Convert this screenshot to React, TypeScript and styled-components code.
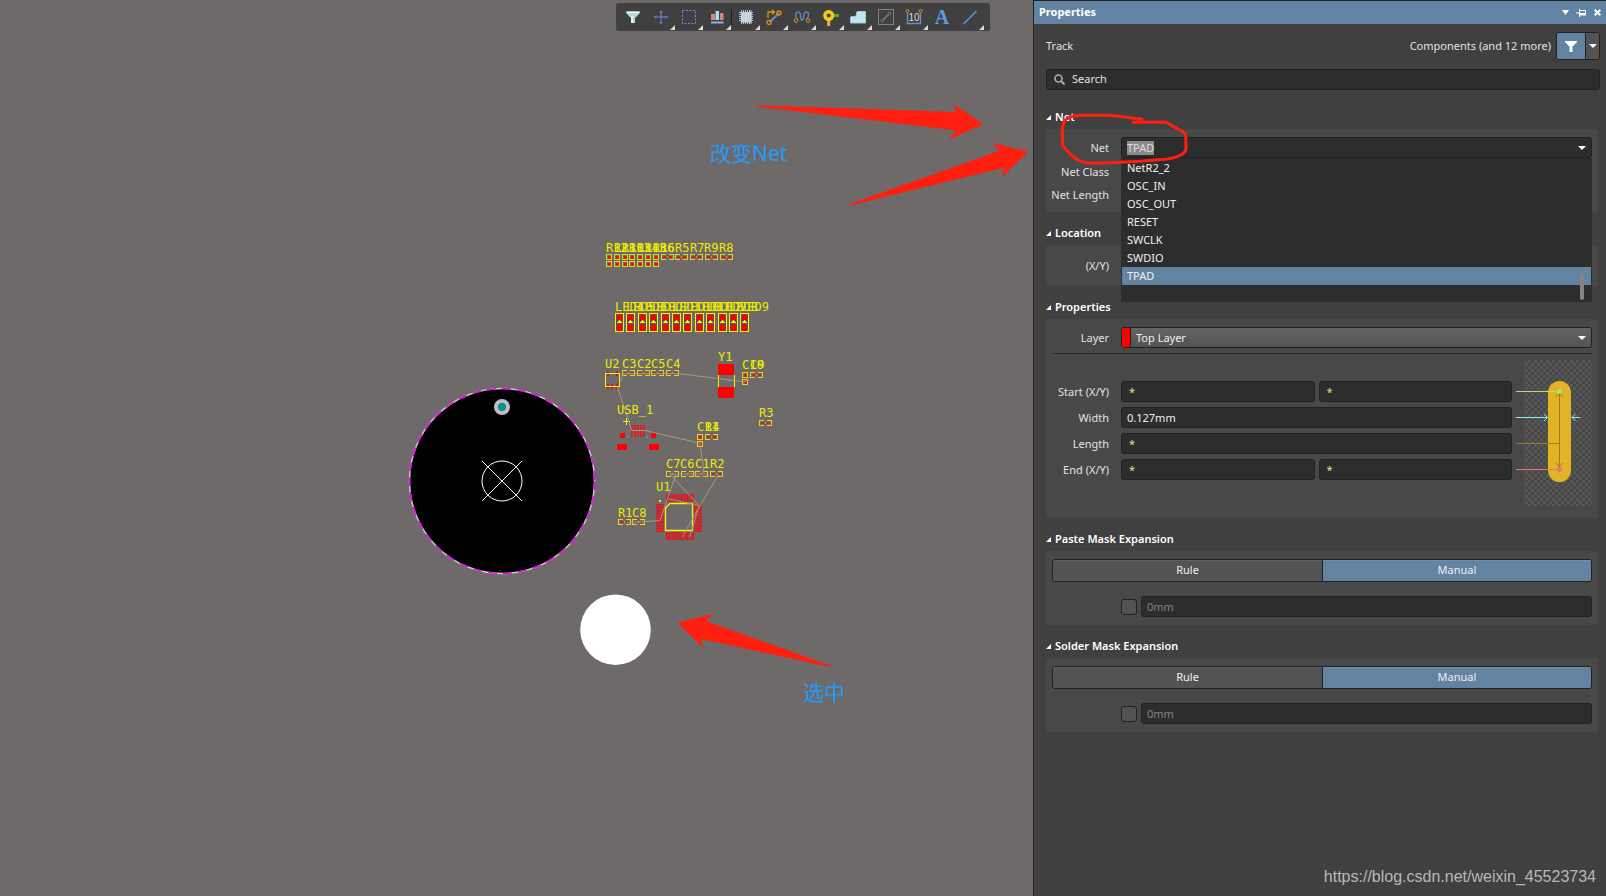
import React, { useEffect, useRef } from "react";
import styled, { createGlobalStyle, css } from "styled-components";

const color = {
  canvas: "#6e6a69",
  panel: "#404040",
  group: "#484848",
  field: "#2d2d2d",
  edge: "#212121",
  accent: "#6383a2",
  button: "#535353",
  text: "#e2e2e2",
  red: "#ff1f10",
  silk: "#f5f500",
  pad: "#ff0000",
  net: "#a09e78",
};

const GlobalStyle = createGlobalStyle`
  *, *::before, *::after { box-sizing: border-box; }
  body {
    margin: 0;
    background: ${color.canvas};
    color: ${color.text};
    font: 11px/16px "Noto Sans", "Open Sans", sans-serif;
  }
  button, input, select { font: inherit; color: inherit; }
`;

/* ---------- page ---------- */

const Page = styled.div`
  position: relative;
  display: grid;
  grid-template-columns: minmax(0, 1033fr) minmax(400px, 573fr);
  min-height: 100vh;
`;

const Workspace = styled.main`
  position: relative;
  overflow: hidden;
  background: ${color.canvas};
`;

const BoardDrawing = styled.svg`
  position: absolute;
  inset: 0;
  width: 100%;
  height: 100%;
`;

const Silk = styled.text`
  font-family: "DejaVu Sans Mono", monospace;
  font-size: 12px;
  fill: #ecec00;
`;

const Note = styled.text`
  font-family: "Noto Sans", "Noto Sans CJK SC", sans-serif;
  font-size: 21px;
  fill: #1e9bff;
`;

/* ---------- toolbar ---------- */

const Toolbar = styled.div`
  position: absolute;
  top: 3px;
  left: 50%;
  transform: translateX(-50%);
  display: flex;
  align-items: center;
  padding: 0 6px 0 3px;
  background: ${color.panel};
  border-radius: 2px;
`;

const ToolButton = styled.button<{ $menu?: boolean }>`
  position: relative;
  display: grid;
  place-items: center;
  width: 28px;
  height: 28px;
  padding: 0;
  border: 0;
  background: none;
  ${(p) =>
    p.$menu &&
    css`
      &::after {
        content: "";
        position: absolute;
        right: 0;
        bottom: 1px;
        border-style: solid;
        border-width: 0 0 5px 5px;
        border-color: transparent transparent #dcdcdc transparent;
      }
    `}
`;

const ToolDivider = styled.span`
  width: 1px;
  height: 16px;
  background: #1c1c1c;
`;

const ToolIcon = styled.svg.attrs({ viewBox: "0 0 18 18", "aria-hidden": true })`
  width: 18px;
  height: 18px;
  overflow: visible;
  fill: none;
`;

const Letter = styled.span`
  font: bold 20px/20px "Liberation Serif", serif;
  color: #5c9de6;
`;

/* ---------- panel ---------- */

const Panel = styled.aside`
  display: flex;
  flex-direction: column;
  border-top: 1px solid ${color.edge};
  border-left: 1px solid ${color.edge};
  background: ${color.panel};
`;

const TitleBar = styled.header`
  display: flex;
  align-items: center;
  justify-content: space-between;
  height: 23px;
  padding: 0 3px 0 5px;
  background: ${color.accent};
`;

const Title = styled.h1`
  margin: 0;
  padding-bottom: 2px;
  font-size: 11px;
  font-weight: 700;
  color: #fff;
`;

const TitleActions = styled.div`
  display: flex;
  gap: 4px;
`;

const TitleButton = styled.button`
  display: grid;
  place-items: center;
  width: 12px;
  height: 16px;
  padding: 0;
  border: 0;
  background: none;
`;

const PanelBody = styled.div`
  padding: 8px 6px 0 12px;
`;

const Scope = styled.div`
  display: flex;
  align-items: center;
  gap: 5px;
  height: 28px;
  margin-bottom: 9px;
`;

const ScopeKind = styled.span`
  flex: 1;
`;

const FilterGroup = styled.div`
  display: flex;
  height: 28px;
  border: 1px solid ${color.edge};
  border-radius: 3px;
  overflow: hidden;
`;

const FilterButton = styled.button<{ $narrow?: boolean }>`
  display: grid;
  place-items: center;
  width: ${(p) => (p.$narrow ? 14 : 28)}px;
  padding: 0;
  border: 0;
  background: ${(p) => (p.$narrow ? color.button : color.accent)};
  & + & {
    border-left: 1px solid ${color.edge};
  }
`;

const fieldBox = css`
  height: 21px;
  border: 1px solid ${color.edge};
  border-radius: 3px;
  background: ${color.field};
`;

const SearchBox = styled.label`
  ${fieldBox}
  display: flex;
  align-items: center;
  gap: 7px;
  padding: 0 7px;
`;

const SearchInput = styled.input`
  flex: 1;
  min-width: 0;
  padding: 0 0 2px;
  border: 0;
  outline: 0;
  background: none;
  &::placeholder {
    color: ${color.text};
    opacity: 1;
  }
`;

const Sections = styled.div`
  padding: 6px 2px 0 0;
`;

const SectionTitle = styled.h2`
  display: flex;
  align-items: center;
  gap: 4px;
  height: 33px;
  margin: 0;
  padding-top: 9px;
  font-size: 11px;
  font-weight: 600;
  color: #fff;
  &::before {
    content: "";
    border-style: solid;
    border-width: 0 0 5px 5px;
    border-color: transparent transparent #fff transparent;
  }
`;

const Group = styled.div<{ $bottom?: number }>`
  position: relative;
  padding: 8px 6px ${(p) => p.$bottom ?? 8}px;
  border-radius: 3px;
  background: ${color.group};
`;

const Row = styled.div<{ $height?: number }>`
  display: grid;
  grid-template-columns: 57px minmax(0, 1fr);
  column-gap: 12px;
  align-items: center;
  height: ${(p) => p.$height ?? 21}px;
`;

const RowLabel = styled.label`
  justify-self: end;
  white-space: nowrap;
`;

const ReadOnlyRows = styled.div`
  padding: 2px 0 1px;
`;

const Combo = styled.div`
  ${fieldBox}
  position: relative;
  display: flex;
  align-items: center;
  padding: 0 3px 0 5px;
`;

const ComboInput = styled.input`
  flex: 1;
  min-width: 0;
  height: 14px;
  padding: 0;
  border: 0;
  outline: 0;
  background: none;
  line-height: 14px;
  &::selection {
    background: #8a8a8a;
    color: #dedede;
  }
`;

const ArrowButton = styled.button`
  display: grid;
  place-items: center;
  width: 12px;
  height: 16px;
  padding: 0;
  border: 0;
  background: none;
`;

const Options = styled.ul`
  position: absolute;
  z-index: 1;
  top: 20px;
  left: -1px;
  right: -1px;
  height: 144px;
  margin: 0;
  padding: 1px;
  list-style: none;
  background: ${color.field};
  &::after {
    content: "";
    position: absolute;
    right: 8px;
    bottom: 2px;
    width: 4px;
    height: 27px;
    border-radius: 2px;
    background: #858585;
  }
`;

const Option = styled.li<{ $active: boolean }>`
  height: 18px;
  padding: 0 5px;
  line-height: 18px;
  color: #f0f0f0;
  background: ${(p) => (p.$active ? color.accent : "transparent")};
`;

const RedRing = styled.svg`
  position: absolute;
  z-index: 2;
  top: 0;
  left: 0;
  width: 144px;
  height: 40px;
  overflow: visible;
  pointer-events: none;
`;

const LayerPicker = styled.div`
  position: relative;
  display: flex;
  align-items: center;
  height: 21px;
  border: 1px solid ${color.edge};
  border-radius: 3px;
  background: linear-gradient(#656565, #525252);
  overflow: hidden;
`;

const Swatch = styled.span`
  width: 9px;
  height: 19px;
  border-right: 1px solid ${color.edge};
  background: #ff0000;
`;

const LayerSelect = styled.select`
  flex: 1;
  min-width: 0;
  height: 19px;
  padding: 0 5px;
  border: 0;
  outline: 0;
  appearance: none;
  background: none;
  color: #f0f0f0;
`;

const PickerArrow = styled.span`
  display: grid;
  place-items: center;
  width: 12px;
  margin-right: 3px;
`;

const Rule = styled.hr`
  height: 1px;
  margin: 5px 0 6px;
  border: 0;
  background: #2b2b2b;
`;

const Geometry = styled.div`
  display: grid;
  grid-template-columns: minmax(0, 1fr) 76px;
  column-gap: 4px;
`;

const GeometryRows = styled.div`
  display: grid;
  align-content: start;
  row-gap: 5px;
  padding-top: 21px;
`;

const Pair = styled.div`
  display: flex;
  gap: 4px;
`;

const Field = styled.input<{ $mixed?: boolean }>`
  ${fieldBox}
  flex: 1;
  width: 100%;
  min-width: 0;
  padding: 0 ${(p) => (p.$mixed ? 7 : 5)}px;
  outline: 0;
  color: ${(p) => (p.$mixed ? "#f0dc90" : "#f0f0f0")};
  &:disabled {
    color: #858585;
  }
`;

const TrackPreview = styled.svg`
  width: 76px;
  height: 146px;
  fill: none;
`;

const Segments = styled.div`
  display: grid;
  grid-template-columns: 1fr 1fr;
  height: 23px;
  margin-bottom: 14px;
  border: 1px solid ${color.edge};
  border-radius: 3px;
  overflow: hidden;
`;

const Segment = styled.button<{ $on?: boolean }>`
  padding: 0 0 2px;
  border: 0;
  color: #f0f0f0;
  background: ${(p) => (p.$on ? color.accent : color.button)};
  box-shadow: inset 0 1px ${(p) => (p.$on ? "#7190ad" : "#606060")};
  & + & {
    border-left: 1px solid ${color.edge};
  }
`;

const Expansion = styled.div`
  display: flex;
  align-items: center;
  gap: 4px;
  padding-left: 69px;
`;

const Check = styled.input`
  width: 16px;
  height: 16px;
  margin: 0;
  appearance: none;
  border: 1px solid ${color.edge};
  border-radius: 3px;
  background: ${color.button};
`;

const Watermark = styled.footer`
  margin-top: auto;
  padding: 0 10px 8px;
  text-align: right;
  font: 16px/22px "Liberation Sans", Arial, sans-serif;
  color: #b8b8b8;
`;

/* ---------- board parts ---------- */

const Pad = ({ x, y }: { x: number; y: number }) => (
  <g>
    <rect x={x + 0.5} y={y + 0.5} width="5" height="5" fill="none" stroke="#dada18" />
    <rect x={x + 2} y={y + 2} width="3" height="3" fill="#f0101c" />
  </g>
);

/* Two-pad part lying flat: a bracket opens towards the middle on each side. */
const Flat = ({ x, y }: { x: number; y: number }) => (
  <g>
    <path
      d={`M${x + 5} ${y + 0.5}H${x + 0.5}V${y + 5.5}H${x + 5}M${x + 8} ${y + 0.5}H${x + 12.5}V${y + 5.5}H${x + 8}`}
      fill="none"
      stroke="#dada18"
    />
    <path d={`M${x + 2} ${y + 2}h3v2h-3zM${x + 8} ${y + 2}h3v2h-3z`} fill="#f0101c" />
    <path d={`M${x + 6.5} ${y + 2}v2`} stroke="#b0a030" />
  </g>
);

const Upright = ({ x, y }: { x: number; y: number }) => (
  <g>
    <Pad x={x} y={y} />
    <Pad x={x} y={y + 7} />
  </g>
);

const Led = ({ x }: { x: number }) => (
  <g>
    <rect x={x + 0.5} y="313.5" width="8" height="18" fill="#6b4a55" stroke={color.silk} />
    <rect x={x + 2} y="315" width="5" height="5" fill={color.pad} />
    <rect x={x + 2} y="325" width="5" height="6" fill={color.pad} />
    <path d={`M${x + 1} 323L${x + 4.5} 320L${x + 8} 323z`} fill={color.silk} />
  </g>
);

const overlapped = ["R12", "R11", "R10", "R13", "R14", "R15", "R16"];
const singles = ["R6", "R5", "R7", "R9", "R8"];
const leds = ["LED4", "LED5", "LED6", "LED1", "LED2", "LED3", "LED10", "LED11", "LED12", "LED7", "LED8", "LED9"];
const ledX = (i: number) => Math.round(615 + i * 11.4);

const labels: [string, number, number][] = [
  ["U2", 605, 368],
  ["C3", 622, 368],
  ["C2", 637, 368],
  ["C5", 651, 368],
  ["C4", 666, 368],
  ["Y1", 718, 361],
  ["C10", 742, 369],
  ["C9", 750, 369],
  ["USB_1", 617, 414],
  ["C11", 697, 431],
  ["R4", 705, 431],
  ["R3", 759, 417],
  ["C7", 666, 468],
  ["C6", 680, 468],
  ["C1", 695, 468],
  ["R2", 710, 468],
  ["U1", 656, 491],
  ["R1", 618, 517],
  ["C8", 632, 517],
];

const pinOffsets = Array.from({ length: 10 }, (_, i) => i * 3);

const Board = () => (
  <BoardDrawing aria-label="PCB layout">
    <circle cx="502" cy="481" r="92.500" fill="#000" stroke="#d2c4d2" strokeWidth="1.500" />
    <circle cx="502" cy="481" r="92.500" fill="none" stroke="#f000f0" strokeWidth="1.500" strokeDasharray="9 6" />
    <circle cx="502" cy="407" r="8" fill="#c4bcc4" />
    <circle cx="502" cy="407" r="4.200" fill="#009494" />
    <g stroke="#fff" fill="none">
      <circle cx="502" cy="481" r="20" />
      <path d="M482 461l40 40M522 461l-40 40" />
    </g>
    <circle cx="615.500" cy="629.700" r="35.300" fill="#fff" />

    <g shapeRendering="crispEdges">
      {overlapped.map((name, i) => (
        <Upright key={name} x={606 + Math.round(i * 7.8)} y={254} />
      ))}
      {singles.map((name, i) => (
        <Flat key={name} x={Math.round(660.5 + i * 14.8)} y={254} />
      ))}
      {leds.map((name, i) => (
        <Led key={name} x={ledX(i)} />
      ))}

      <path d="M608 371v5M617 371v5M608 384v5M612 384v5M617 384v5" stroke="#e0101c" strokeWidth="2" />
      <rect x="605.5" y="373.5" width="14" height="13" fill="none" stroke={color.silk} />
      {[622, 637, 651, 666].map((x) => (
        <Flat key={x} x={x} y={370} />
      ))}
      <rect x="718" y="364" width="16" height="11" fill={color.pad} />
      <rect x="718" y="387" width="16" height="11" fill={color.pad} />
      <path d="M718.5 375v12M734.5 375v12" stroke={color.silk} />
      <Upright x={742} y={372} />
      <Flat x={750} y={372} />

      <path d="M626.5 418v7M623 421.500h7" stroke={color.silk} />
      <path d="M632 425v12M635 425v12M638 425v12M641 425v12M644 425v12" stroke="#d8202c" strokeWidth="2" />
      <rect x="620" y="433" width="5" height="5" fill={color.pad} />
      <rect x="651" y="433" width="5" height="5" fill={color.pad} />
      <rect x="617" y="444" width="10" height="6" fill={color.pad} />
      <rect x="649" y="444" width="10" height="6" fill={color.pad} />
      <rect x="627" y="436" width="2" height="2" fill="#3f9cb0" />
      <rect x="646" y="436" width="2" height="2" fill="#3f9cb0" />

      <Upright x={697} y={434} />
      <Flat x={705} y={434} />
      <Flat x={759} y={420} />
      {[666, 681, 695, 710].map((x) => (
        <Flat key={x} x={x} y={471} />
      ))}
      <Flat x={618} y={519} />
      <Flat x={632} y={519} />

      <path d="M666 494h27v8h-27zM666 532h27v8h-27zM656 504h8v27h-8zM694 504h8v27h-8z" fill="#a83c44" />
      {pinOffsets.map((d) => (
        <path
          key={d}
          d={`M${666.5 + d} 494v8M${666.5 + d} 532v8M656 ${504.5 + d}h8M694 ${504.5 + d}h8`}
          stroke="#f0101c"
        />
      ))}
      <rect x="659" y="500" width="2" height="2" fill={color.silk} />
    </g>
    <path
      d="M670 503.500h22.500v27h-27v-22.500z"
      fill={color.canvas}
      stroke={color.silk}
      strokeWidth="1.300"
    />

    <g fill="none" stroke={color.net}>
      <path d="M619.700 382.500L624.300 373.500H678L745 382L751.500 375.500" />
      <path d="M617.500 387L631.700 430.500H645L700 443.300L704 472.500" />
      <path d="M627.300 522.500L660 520.700L676 474" />
      <path d="M669.300 473.500L699 505.500L669 499" />
      <path d="M719 474L698.300 508.500L682.300 537M699 506L689.700 537" />
      <path d="M669 474H706" />
    </g>

    {overlapped.map((name, i) => (
      <Silk key={name} x={606 + Math.round(i * 7.8)} y="252">
        {name}
      </Silk>
    ))}
    {singles.map((name, i) => (
      <Silk key={name} x={Math.round(660 + i * 14.8)} y="252">
        {name}
      </Silk>
    ))}
    {leds.map((name, i) => (
      <Silk key={name} x={ledX(i)} y="311">
        {name}
      </Silk>
    ))}
    {labels.map(([name, x, y]) => (
      <Silk key={name} x={x} y={y}>
        {name}
      </Silk>
    ))}

    <g fill={color.red}>
      <path d="M757.700 105.300L956 112L953 103.700L983.300 124.300L949.700 139.300L955 130.300L757.700 106.700z" />
      <path d="M850 203.700L999.700 150.700L992 142.700L1028.300 151.700L1001.700 177.300L1004 167.700L850.700 205.300z" />
      <path d="M677.700 622.700L713 613.700L705.700 621L831 665.700V667.300L701 639L703.300 648.300z" />
    </g>
    <Note x="710" y="161">
      改变Net
    </Note>
    <Note x="803" y="700">
      选中
    </Note>
  </BoardDrawing>
);

/* ---------- small glyphs ---------- */

const Caret = () => (
  <svg width="8" height="4" viewBox="0 0 8 4" aria-hidden="true">
    <path d="M0 0h8L4 4z" fill="#fff" />
  </svg>
);

const orange = "#d9920f";

const tools = (
  <>
    <ToolButton title="Selection filter">
      <ToolIcon>
        <path d="M2.500 3.500h13v2L11 10v5H7v-5L2.500 5.500z" fill="#b9d8de" />
        <path d="M2.500 3.500h13v1.500h-13z" fill="#f0fafa" />
        <path d="M7 8h2v7H7z" fill="#e6f4f6" />
      </ToolIcon>
    </ToolButton>
    <ToolButton $menu title="Move">
      <ToolIcon stroke="#7189dc">
        <path d="M9 3v12.500M2.500 9h13M7.500 4.500L9 3l1.500 1.500M7.500 14L9 15.500l1.500-1.500M4 7.500L2.500 9 4 10.500M14 7.500L15.500 9 14 10.500" />
      </ToolIcon>
    </ToolButton>
    <ToolButton $menu title="Select area">
      <ToolIcon stroke="#6f8af0">
        <path d="M2.500 2.500h13v13h-13z" strokeDasharray="2 1.500" />
      </ToolIcon>
    </ToolButton>
    <ToolButton $menu title="Align">
      <ToolIcon>
        <path d="M3 6h4v6H3zM12 5h3.500v7H12z" fill="#e08078" />
        <path d="M7.500 3h3.500v9H7.500z" fill="#a8e0f0" />
        <path d="M3 13.500h12.500v2H3z" fill="#7fb4f5" />
      </ToolIcon>
    </ToolButton>
    <ToolDivider />
    <ToolButton $menu title="Place component">
      <ToolIcon>
        <path
          d="M4.500 2v14M6.500 2v14M8.500 2v14M10.500 2v14M12.500 2v14M14 2v14M2 4.500h14M2 6.500h14M2 8.500h14M2 10.500h14M2 12.500h14"
          stroke="#a5cdd5"
        />
        <rect x="4" y="4" width="10.500" height="10.500" fill="#cdd2de" />
      </ToolIcon>
    </ToolButton>
    <ToolButton $menu title="Route">
      <ToolIcon>
        <path d="M5 14L14 5" stroke="#6a8fc8" strokeWidth="2" />
        <g stroke={orange} strokeWidth="1.300">
          <path d="M3 10V4h6M7 1.500L9.500 4L7 6.500" />
          <circle cx="4" cy="14.500" r="2" />
          <circle cx="14" cy="5" r="2" />
        </g>
      </ToolIcon>
    </ToolButton>
    <ToolButton $menu title="Tune length">
      <ToolIcon>
        <path
          d="M4.500 11C1 8 3 4 5 4s2.500 2 2.500 4S8 12 9 12s1.700-2 1.700-4 .8-4 2.800-4 3.500 4 0 7"
          stroke="#5f83b5"
          strokeWidth="1.500"
        />
        <circle cx="3" cy="12.500" r="1.800" stroke={orange} />
        <circle cx="15" cy="12.500" r="1.800" stroke={orange} />
      </ToolIcon>
    </ToolButton>
    <ToolButton $menu title="Place via">
      <ToolIcon>
        <path d="M12 7.500h6" stroke="#4fae35" strokeWidth="3" />
        <path d="M7.700 12v6" stroke="#efa860" strokeWidth="3" />
        <circle cx="7.700" cy="7.500" r="3.800" stroke="#f5cb12" strokeWidth="3.400" />
      </ToolIcon>
    </ToolButton>
    <ToolButton $menu title="Place polygon">
      <ToolIcon>
        <path
          d="M1.500 15V9.500Q1.500 8.500 3 8.500H5.500Q7.500 8.500 7.500 6.500V4.500L8.500 3.500H16.500V15z"
          fill="#c0e6f2"
          stroke="#9cc8d8"
        />
      </ToolIcon>
    </ToolButton>
    <ToolButton $menu title="Place keepout">
      <ToolIcon stroke="#808080">
        <rect x="1.500" y="1.500" width="15" height="15" />
        <path d="M6.500 11.500l5-5" strokeWidth="1.500" />
        <circle cx="5.500" cy="12.500" r="1.300" />
        <circle cx="12.500" cy="5.500" r="1.300" />
      </ToolIcon>
    </ToolButton>
    <ToolButton $menu title="Place dimension">
      <ToolIcon>
        <path d="M2.500 5v10.500h13V5" stroke="#6b8fc4" strokeWidth="1.300" />
        <circle cx="2.500" cy="3" r="1.500" stroke={orange} />
        <circle cx="15.500" cy="3" r="1.500" stroke={orange} />
        <text x="9" y="13" textAnchor="middle" fontSize="10" fill="#dadada" fontFamily="Liberation Sans, sans-serif">
          10
        </text>
      </ToolIcon>
    </ToolButton>
    <ToolButton title="Place text">
      <Letter>A</Letter>
    </ToolButton>
    <ToolButton $menu title="Place line">
      <ToolIcon>
        <path d="M2.500 16L15.500 3" stroke="#4d95e8" strokeWidth="1.600" />
      </ToolIcon>
    </ToolButton>
  </>
);

const Preview = () => (
  <TrackPreview viewBox="0 0 76 146" aria-hidden="true">
    <defs>
      <pattern id="checker" width="6" height="6" patternUnits="userSpaceOnUse">
        <path d="M0 0h3v3H0zM3 3h3v3H3z" fill="#565656" />
      </pattern>
    </defs>
    <rect x="8" width="68" height="146" fill="url(#checker)" />
    <rect x="32" y="21" width="23" height="101" rx="11.500" fill="#e0b424" />
    <path d="M43.500 33v74M40 37l3.500-4 3.500 4M40 103l3.500 4 3.500-4M0 83.500h43.500" stroke="#9c7c1c" />
    <path d="M0 31.500h43.500" stroke="#b4e070" />
    <circle cx="43.500" cy="31.500" r="2.500" fill="#b4e070" />
    <path d="M0 57.500h31M28 54l3.500 3.500L28 61M64 57.500h-8M59.500 54L56 57.500l3.500 3.500" stroke="#8ef0f0" />
    <path d="M0 109.500h43.500" stroke="#ee7474" />
    <circle cx="43.500" cy="109.500" r="2.500" fill="#ee7474" />
  </TrackPreview>
);

/* ---------- panel sections ---------- */

const netNames = ["NetR2_2", "OSC_IN", "OSC_OUT", "RESET", "SWCLK", "SWDIO", "TPAD"];

const NetSection = () => {
  const input = useRef<HTMLInputElement>(null);
  useEffect(() => {
    input.current?.focus();
    input.current?.select();
  }, []);
  return (
    <section>
      <SectionTitle>Net</SectionTitle>
      <Group $bottom={5}>
        <Row>
          <RowLabel htmlFor="net">Net</RowLabel>
          <Combo>
            <ComboInput
              id="net"
              ref={input}
              role="combobox"
              aria-expanded="true"
              aria-controls="net-options"
              defaultValue="TPAD"
            />
            <ArrowButton aria-label="Show nets">
              <Caret />
            </ArrowButton>
            <Options id="net-options" role="listbox">
              {netNames.map((name) => (
                <Option key={name} role="option" aria-selected={name === "TPAD"} $active={name === "TPAD"}>
                  {name}
                </Option>
              ))}
            </Options>
          </Combo>
        </Row>
        <ReadOnlyRows>
          <Row $height={23}>
            <RowLabel as="span">Net Class</RowLabel>
          </Row>
          <Row $height={23}>
            <RowLabel as="span">Net Length</RowLabel>
          </Row>
        </ReadOnlyRows>
        <RedRing aria-hidden="true">
          <path
            d="M97.300-9.500L80.700-11.700L64-13.700H34Q22-12.500 20-9.700Q15.500-4 16.300 4.300L16.700 16.700Q23 25 30.700 30.300Q38 34.500 44 34.300L64 33.700L94 32.300L120.700 30Q133 28 137.300 24.300Q140.500 21 140 17.700L139.700 5Q134 0 127.300-2.300Q123-6 119-6.700H85.700"
            fill="none"
            stroke={color.red}
            strokeWidth="3"
            strokeLinejoin="round"
          />
        </RedRing>
      </Group>
    </section>
  );
};

const PairRow = ({ label, id }: { label: string; id: string }) => (
  <Row>
    <RowLabel htmlFor={id}>{label}</RowLabel>
    <Pair>
      <Field id={id} $mixed defaultValue="*" />
      <Field $mixed defaultValue="*" aria-label={`${label} second value`} />
    </Pair>
  </Row>
);

const MaskSection = ({ title }: { title: string }) => (
  <section>
    <SectionTitle>{title}</SectionTitle>
    <Group>
      <Segments>
        <Segment>Rule</Segment>
        <Segment $on>Manual</Segment>
      </Segments>
      <Expansion>
        <Check type="checkbox" aria-label={`${title} enabled`} />
        <Field disabled defaultValue="0mm" aria-label={title} />
      </Expansion>
    </Group>
  </section>
);

export default function App() {
  return (
    <Page>
      <GlobalStyle />
      <Workspace>
        <Board />
      </Workspace>
      <Panel>
        <TitleBar>
          <Title>Properties</Title>
          <TitleActions>
            <TitleButton aria-label="Panel menu">
              <svg width="7" height="5" viewBox="0 0 7 5">
                <path d="M0 0h7L3.500 5z" fill="#fff" />
              </svg>
            </TitleButton>
            <TitleButton aria-label="Pin panel">
              <svg width="10" height="8" viewBox="0 0 10 8">
                <path d="M0 4h3M3.500 0v8M4 1.500h5.500v4M4 5h5.500" fill="none" stroke="#fff" />
                <path d="M4 4h6v2.500H4z" fill="#fff" />
              </svg>
            </TitleButton>
            <TitleButton aria-label="Close panel">
              <svg width="7" height="7" viewBox="0 0 7 7">
                <path d="M.7.7l5.600 5.600M6.300.7L.7 6.300" stroke="#fff" strokeWidth="2" />
              </svg>
            </TitleButton>
          </TitleActions>
        </TitleBar>
        <PanelBody>
          <Scope>
            <ScopeKind>Track</ScopeKind>
            <span>Components (and 12 more)</span>
            <FilterGroup>
              <FilterButton aria-label="Filter objects">
                <svg width="12" height="11" viewBox="0 0 12 11">
                  <path d="M0 0h12v1L7.500 5.500V11h-3V5.500L0 1z" fill="#fff" />
                </svg>
              </FilterButton>
              <FilterButton $narrow aria-label="Filter options">
                <Caret />
              </FilterButton>
            </FilterGroup>
          </Scope>
          <SearchBox>
            <svg width="11" height="11" viewBox="0 0 11 11" aria-hidden="true">
              <circle cx="4.500" cy="4.500" r="3.500" fill="none" stroke="#a8a8a8" strokeWidth="1.700" />
              <path d="M7 7l3.500 3.500" stroke="#a8a8a8" strokeWidth="2" />
            </svg>
            <SearchInput placeholder="Search" aria-label="Search" />
          </SearchBox>
          <Sections>
            <NetSection />
            <section>
              <SectionTitle>Location</SectionTitle>
              <Group>
                <Row $height={25}>
                  <RowLabel as="span">(X/Y)</RowLabel>
                </Row>
              </Group>
            </section>
            <section>
              <SectionTitle>Properties</SectionTitle>
              <Group $bottom={12}>
                <Row>
                  <RowLabel htmlFor="layer">Layer</RowLabel>
                  <LayerPicker>
                    <Swatch />
                    <LayerSelect id="layer">
                      <option>Top Layer</option>
                    </LayerSelect>
                    <PickerArrow>
                      <Caret />
                    </PickerArrow>
                  </LayerPicker>
                </Row>
                <Rule />
                <Geometry>
                  <GeometryRows>
                    <PairRow label="Start (X/Y)" id="start" />
                    <Row>
                      <RowLabel htmlFor="width">Width</RowLabel>
                      <Field id="width" defaultValue="0.127mm" />
                    </Row>
                    <Row>
                      <RowLabel htmlFor="length">Length</RowLabel>
                      <Field id="length" $mixed defaultValue="*" />
                    </Row>
                    <PairRow label="End (X/Y)" id="end" />
                  </GeometryRows>
                  <Preview />
                </Geometry>
              </Group>
            </section>
            <MaskSection title="Paste Mask Expansion" />
            <MaskSection title="Solder Mask Expansion" />
          </Sections>
        </PanelBody>
        <Watermark>https://blog.csdn.net/weixin_45523734</Watermark>
      </Panel>
      <Toolbar role="toolbar" aria-label="Active bar">
        {tools}
      </Toolbar>
    </Page>
  );
}
